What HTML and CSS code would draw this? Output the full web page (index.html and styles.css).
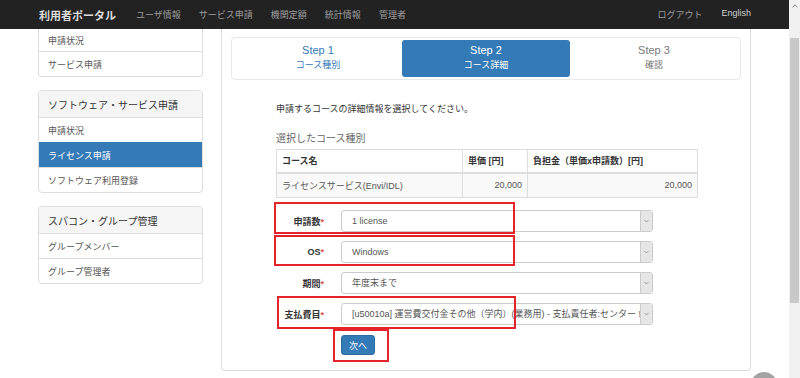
FILE: index.html
```html
<!DOCTYPE html>
<html lang="ja">
<head>
<meta charset="utf-8">
<title>利用者ポータル</title>
<link rel="stylesheet" href="styles.css">
</head>
<body>
<div class="page">
  <div class="viewport">
    <header class="navbar">
      <div class="brand">利用者ポータル</div>
      <nav class="nav-left">
        <a>ユーザ情報</a>
        <a>サービス申請</a>
        <a>機関定額</a>
        <a>統計情報</a>
        <a>管理者</a>
      </nav>
      <nav class="nav-right">
        <a>ログアウト</a>
        <a class="lang">English</a>
      </nav>
    </header>
    <div class="main">
      <aside class="sidebar">
        <div class="side-panel first">
          <a class="side-item">申請状況</a>
          <a class="side-item">サービス申請</a>
        </div>
        <div class="side-panel">
          <div class="side-head">ソフトウェア・サービス申請</div>
          <a class="side-item">申請状況</a>
          <a class="side-item active">ライセンス申請</a>
          <a class="side-item">ソフトウェア利用登録</a>
        </div>
        <div class="side-panel">
          <div class="side-head">スパコン・グループ管理</div>
          <a class="side-item">グループメンバー</a>
          <a class="side-item">グループ管理者</a>
        </div>
      </aside>
      <section class="panel">
        <div class="steps">
          <div class="step done"><div class="step-title">Step 1</div><div class="step-sub">コース種別</div></div>
          <div class="step active"><div class="step-title">Step 2</div><div class="step-sub">コース詳細</div></div>
          <div class="step todo"><div class="step-title">Step 3</div><div class="step-sub">確認</div></div>
        </div>
        <div class="content">
          <p class="intro">申請するコースの詳細情報を選択してください。</p>
          <p class="subhead">選択したコース種別</p>
          <table class="course-table">
            <thead>
              <tr><th class="c1">コース名</th><th class="c2">単価 [円]</th><th class="c3">負担金（単価x申請数）[円]</th></tr>
            </thead>
            <tbody>
              <tr><td>ライセンスサービス(Envi/IDL)</td><td class="num">20,000</td><td class="num">20,000</td></tr>
            </tbody>
          </table>
          <form class="form">
            <div class="form-row">
              <label class="label">申請数<span class="req">*</span></label>
              <div class="select"><span class="select-value">1 license</span><span class="select-arrow"><svg width="5" height="4" viewBox="0 0 5 4"><path d="M0.5 1 L2.5 3 L4.5 1" fill="none" stroke="#888" stroke-width="0.8"/></svg></span></div>
            </div>
            <div class="form-row">
              <label class="label">OS<span class="req">*</span></label>
              <div class="select"><span class="select-value">Windows</span><span class="select-arrow"><svg width="5" height="4" viewBox="0 0 5 4"><path d="M0.5 1 L2.5 3 L4.5 1" fill="none" stroke="#888" stroke-width="0.8"/></svg></span></div>
            </div>
            <div class="form-row">
              <label class="label">期間<span class="req">*</span></label>
              <div class="select"><span class="select-value">年度末まで</span><span class="select-arrow"><svg width="5" height="4" viewBox="0 0 5 4"><path d="M0.5 1 L2.5 3 L4.5 1" fill="none" stroke="#888" stroke-width="0.8"/></svg></span></div>
            </div>
            <div class="form-row">
              <label class="label">支払費目<span class="req">*</span></label>
              <div class="select"><span class="select-value">[u50010a] 運営費交付金その他（学内）(業務用) - 支払責任者:センター ‼</span><span class="select-arrow"><svg width="5" height="4" viewBox="0 0 5 4"><path d="M0.5 1 L2.5 3 L4.5 1" fill="none" stroke="#888" stroke-width="0.8"/></svg></span></div>
            </div>
            <div class="form-row">
              <span></span>
              <div><button type="button" class="btn">次へ</button></div>
            </div>
            <div class="mark mark1"></div>
            <div class="mark mark2"></div>
            <div class="mark mark3"></div>
            <div class="mark mark4"></div>
          </form>
        </div>
      </section>
    </div>
    <div class="to-top"></div>
  </div>
  <div class="scrollbar">
    <div class="sb-arrow"><svg width="6" height="4" viewBox="0 0 6 4"><path d="M0.5 3.2 L3 0.8 L5.5 3.2" fill="none" stroke="#777" stroke-width="0.9"/></svg></div>
    <div class="sb-thumb"></div>
  </div>
</div>
</body>
</html>
```

FILE: styles.css
```css
* { box-sizing: border-box; }
html, body { margin: 0; padding: 0; }
body {
  font-family: "Liberation Sans", "Noto Sans CJK JP", sans-serif;
  background: #fff;
  color: #333;
}
.page {
  display: flex;
  width: 800px;
  height: 378px;
  overflow: hidden;
}
.viewport {
  width: 789px;
  height: 378px;
  position: relative;
  overflow: hidden;
  display: flex;
  flex-direction: column;
}

/* navbar */
.navbar {
  display: flex;
  align-items: center;
  height: 29px;
  flex: none;
  background: #222;
  padding: 0 38px 0 39px;
}
.brand {
  font-size: 11px;
  font-weight: bold;
  color: #dcdcdc;
  margin-right: 11px;
  white-space: nowrap;
}
.nav-left { display: flex; }
.nav-left a {
  padding: 0 9px;
  font-size: 9px;
  color: #9d9d9d;
  white-space: nowrap;
}
.nav-right {
  margin-left: auto;
  display: flex;
  gap: 19px;
}
.nav-right a {
  font-size: 9px;
  color: #9d9d9d;
  white-space: nowrap;
}
.nav-right .lang { color: #d0d0d0; }

/* main */
.main {
  display: flex;
  align-items: flex-start;
  padding-left: 38px;
  flex: 1;
}
.sidebar {
  width: 165px;
  display: flex;
  flex-direction: column;
  gap: 13px;
}
.side-panel {
  border: 1px solid #ddd;
  border-radius: 4px;
  background: #fff;
  overflow: hidden;
  display: flex;
  flex-direction: column;
}
.side-panel.first {
  border-top: none;
  border-radius: 0 0 4px 4px;
}
.side-head {
  height: 26px;
  display: flex;
  align-items: center;
  padding: 0 9px;
  background: #f5f5f5;
  font-size: 10px;
  color: #333;
}
.side-item {
  height: 25px;
  display: flex;
  align-items: center;
  padding: 0 9px;
  font-size: 9px;
  color: #555;
  border-top: 1px solid #ddd;
}
.side-panel.first .side-item:first-child {
  border-top: none;
  height: 22px;
}
.side-item.active {
  background: #337ab7;
  border-top-color: #337ab7;
  color: #fff;
}

/* panel */
.panel {
  margin-left: 18px;
  width: 530px;
  height: 342px;
  border: 1px solid #ddd;
  border-top: none;
  border-radius: 0 0 4px 4px;
  padding: 8px 9px 0;
}
.steps {
  display: grid;
  grid-template-columns: repeat(3, 1fr);
  border: 1px solid #e8e8e8;
  border-radius: 4px;
  padding: 2px;
}
.step {
  height: 37px;
  text-align: center;
  border-radius: 3px;
  padding-top: 4px;
}
.step-title {
  font-size: 11px;
  line-height: 13px;
}
.step-sub {
  font-size: 9px;
  line-height: 14px;
  margin-top: 1px;
}
.step.done { color: #337ab7; }
.step.active { background: #337ab7; color: #fff; }
.step.todo { color: #777; }

.content {
  margin-left: 45px;
  width: 421px;
}
.intro {
  margin: 23px 0 0;
  font-size: 9px;
  line-height: 13px;
  color: #333;
}
.subhead {
  margin: 16px 0 0;
  font-size: 10px;
  line-height: 14px;
  color: #666;
}
.course-table {
  margin-top: 3px;
  width: 422px;
  border-collapse: collapse;
  font-size: 9px;
  color: #333;
}
.course-table th, .course-table td {
  border: 1px solid #ddd;
  padding: 0 5px;
  text-align: left;
}
.course-table th {
  height: 23px;
  font-weight: bold;
  border-bottom: 2px solid #ddd;
}
.course-table td {
  height: 25px;
  background: #f9f9f9;
  color: #555;
}
.course-table .c1 { width: 186px; }
.course-table .c2 { width: 65px; }
.course-table td.num { text-align: right; }

.form {
  position: relative;
  margin-top: 12px;
}
.form-row {
  display: grid;
  grid-template-columns: 65px 312px;
  align-items: center;
  min-height: 22px;
  margin-bottom: 9px;
}
.label {
  text-align: right;
  padding-right: 17px;
  font-size: 9px;
  font-weight: bold;
  color: #333;
  white-space: nowrap;
}
.req { color: #d9534f; }
.select {
  display: flex;
  height: 22px;
  border: 1px solid #ccc;
  border-radius: 3px;
  overflow: hidden;
  background: #fff;
}
.select-value {
  flex: 1;
  padding-left: 10px;
  font-size: 9px;
  line-height: 20px;
  color: #555;
  white-space: nowrap;
  overflow: hidden;
}
.select-arrow {
  width: 12px;
  flex: none;
  background: #e6e6e6;
  border-left: 1px solid #ccc;
  display: flex;
  align-items: center;
  justify-content: center;
}
.btn {
  display: block;
  width: 34px;
  height: 20px;
  padding: 0;
  background: #337ab7;
  border: 1px solid #2e6da4;
  border-radius: 3px;
  color: #fff;
  font-family: inherit;
  font-size: 9px;
}

/* annotation boxes */
.mark {
  position: absolute;
  border: 2px solid #e4232b;
}
.mark1 { left: -2px; top: -8px; width: 241px; height: 32px; }
.mark2 { left: -2px; top: 25px; width: 241px; height: 31px; }
.mark3 { left: 1px; top: 86px; width: 239px; height: 33px; }
.mark4 { left: 57px; top: 119px; width: 56px; height: 33px; }

.to-top {
  position: absolute;
  left: 751px;
  top: 372px;
  width: 26px;
  height: 26px;
  border-radius: 50%;
  background: #a3a3a3;
}

/* scrollbar */
.scrollbar {
  width: 11px;
  height: 378px;
  background: #f1f1f1;
  display: flex;
  flex-direction: column;
  align-items: center;
}
.sb-arrow {
  height: 12px;
  display: flex;
  align-items: center;
  justify-content: center;
}
.sb-thumb {
  margin-top: 26px;
  width: 9px;
  height: 265px;
  background: #c8c8c8;
}
```
